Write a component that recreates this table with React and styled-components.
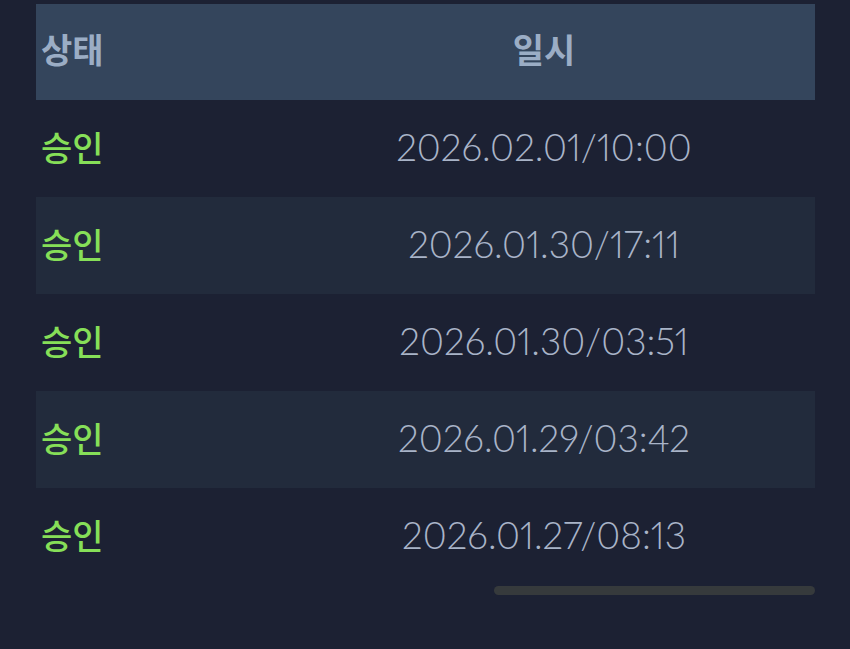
import styled, { createGlobalStyle } from 'styled-components'

const GlobalStyle = createGlobalStyle`
  html, body {
    margin: 0;
    background: #1c2133;
  }
`

const Page = styled.div`
  width: 850px;
  height: 649px;
  box-sizing: border-box;
  padding: 4px 35px 0 36px;
  background: #1c2133;
  font-family: "Noto Sans CJK KR", "Noto Sans", sans-serif;
`

const Table = styled.div`
  display: flex;
  flex-direction: column;
`

const Row = styled.div`
  display: grid;
  grid-template-columns: 237px 1fr;
  align-items: center;
  height: ${p => (p.$head ? '96px' : '97px')};
  background: ${p => (p.$head ? '#34455c' : p.$alt ? '#222b3c' : 'transparent')};
`

const HeadCell = styled.div`
  font-size: 34px;
  font-weight: 700;
  color: #9badc5;
  padding-left: ${p => (p.$center ? '0' : '5px')};
  text-align: ${p => (p.$center ? 'center' : 'left')};
  padding-bottom: 8px;
`

const Status = styled.div`
  font-size: 34px;
  font-weight: 500;
  color: #86df58;
  padding-left: 5px;
  padding-bottom: 5px;
`

const DateCell = styled.div`
  font-family: Lato, "Open Sans", sans-serif;
  font-size: 37px;
  font-weight: 300;
  font-variant-numeric: proportional-nums;
  color: #a9b4c8;
  text-align: center;
  padding-bottom: 4px;
`

const ScrollTrack = styled.div`
  display: flex;
  justify-content: flex-end;
  margin-top: 1px;
`

const ScrollThumb = styled.div`
  width: 321px;
  height: 9px;
  border-radius: 5px;
  background: #363a3c;
`

const rows = [
  '2026.02.01/10:00',
  '2026.01.30/17:11',
  '2026.01.30/03:51',
  '2026.01.29/03:42',
  '2026.01.27/08:13',
]

export default function App() {
  return (
    <>
      <GlobalStyle />
      <Page>
        <Table>
          <Row $head>
            <HeadCell>상태</HeadCell>
            <HeadCell $center>일시</HeadCell>
          </Row>
          {rows.map((d, i) => (
            <Row key={d} $alt={i % 2 === 1}>
              <Status>승인</Status>
              <DateCell>{d}</DateCell>
            </Row>
          ))}
        </Table>
        <ScrollTrack>
          <ScrollThumb />
        </ScrollTrack>
      </Page>
    </>
  )
}
